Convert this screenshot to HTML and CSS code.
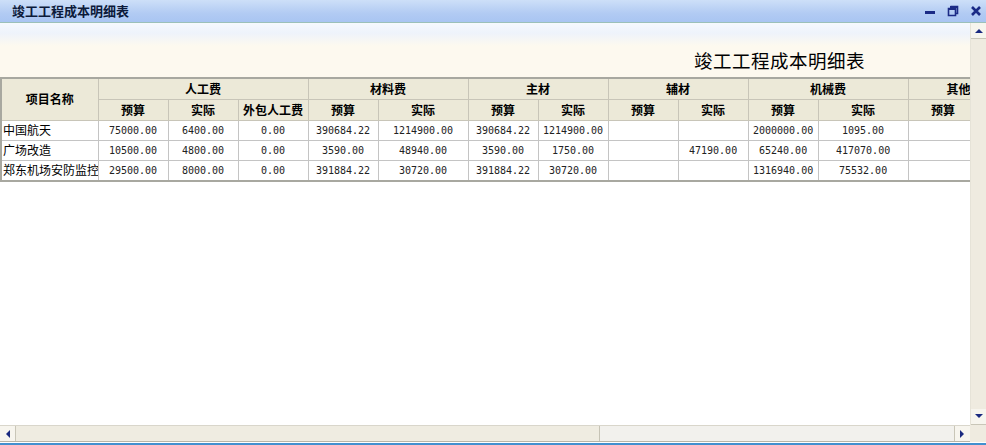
FILE: index.html
```html
<!DOCTYPE html>
<html>
<head>
<meta charset="utf-8">
<link rel="stylesheet" href="styles.css">
</head>
<body>
<div class="window">
  <div class="titlebar">
    <span class="title">竣工工程成本明细表</span>
    <div class="controls">
      <svg width="12" height="12" viewBox="0 0 12 12"><rect x="1" y="6" width="10" height="3" fill="#1b2b86"/></svg>
      <svg width="12" height="12" viewBox="0 0 12 12"><path d="M3.5 1.5h7v7h-2M1.5 3.5h7v7h-7z" fill="none" stroke="#1b2b86" stroke-width="1.6"/><rect x="1" y="3" width="8" height="2" fill="#1b2b86"/><rect x="3" y="1" width="8" height="2" fill="#1b2b86"/></svg>
      <svg width="12" height="12" viewBox="0 0 12 12"><path d="M2 2l8 8M10 2l-8 8" stroke="#1b2b86" stroke-width="2.6"/></svg>
    </div>
  </div>
  <div class="body">
    <div class="content">
      <div class="report-head">
        <h1 class="report-title">竣工工程成本明细表</h1>
      </div>
      <div class="table-wrap">
        <table class="grid">
          <colgroup>
            <col class="c-name"><col class="c70"><col class="c70"><col class="c70">
            <col class="c70"><col class="c90"><col class="c70"><col class="c70">
            <col class="c70"><col class="c70"><col class="c70"><col class="c90">
            <col class="c70">
          </colgroup>
          <thead>
            <tr class="h1">
              <th rowspan="2">项目名称</th>
              <th colspan="3">人工费</th>
              <th colspan="2">材料费</th>
              <th colspan="2">主材</th>
              <th colspan="2">辅材</th>
              <th colspan="2">机械费</th>
              <th class="other">其他</th>
            </tr>
            <tr class="h2">
              <th>预算</th><th>实际</th><th>外包人工费</th>
              <th>预算</th><th>实际</th>
              <th>预算</th><th>实际</th>
              <th>预算</th><th>实际</th>
              <th>预算</th><th>实际</th>
              <th>预算</th>
            </tr>
          </thead>
          <tbody>
            <tr>
              <td class="name">中国航天</td>
              <td>75000.00</td><td>6400.00</td><td>0.00</td>
              <td>390684.22</td><td>1214900.00</td>
              <td>390684.22</td><td>1214900.00</td>
              <td></td><td></td>
              <td>2000000.00</td><td>1095.00</td>
              <td></td>
            </tr>
            <tr>
              <td class="name">广场改造</td>
              <td>10500.00</td><td>4800.00</td><td>0.00</td>
              <td>3590.00</td><td>48940.00</td>
              <td>3590.00</td><td>1750.00</td>
              <td></td><td>47190.00</td>
              <td>65240.00</td><td>417070.00</td>
              <td></td>
            </tr>
            <tr>
              <td class="name">郑东机场安防监控</td>
              <td>29500.00</td><td>8000.00</td><td>0.00</td>
              <td>391884.22</td><td>30720.00</td>
              <td>391884.22</td><td>30720.00</td>
              <td></td><td></td>
              <td>1316940.00</td><td>75532.00</td>
              <td></td>
            </tr>
          </tbody>
        </table>
      </div>
    </div>
    <div class="vscroll">
      <div class="sbtn"><svg width="8" height="5" viewBox="0 0 8 5"><path d="M0 5L4 1 8 5z" fill="#1a2a80"/></svg></div>
      <div class="vtrack"></div>
      <div class="sbtn"><svg width="8" height="5" viewBox="0 0 8 5"><path d="M0 0L4 4 8 0z" fill="#1a2a80"/></svg></div>
    </div>
  </div>
  <div class="hbar">
    <div class="hscroll">
      <div class="sbtn"><svg width="5" height="8" viewBox="0 0 5 8"><path d="M5 0L1 4 5 8z" fill="#1a2a80"/></svg></div>
      <div class="hthumb"></div>
      <div class="htrack"></div>
      <div class="sbtn"><svg width="5" height="8" viewBox="0 0 5 8"><path d="M0 0L4 4 0 8z" fill="#1a2a80"/></svg></div>
    </div>
    <div class="corner"></div>
  </div>
  <div class="bottom"></div>
</div>
</body>
</html>
```

FILE: styles.css
```css
* { box-sizing: border-box; }
html, body { margin: 0; padding: 0; }
body {
  width: 986px;
  height: 445px;
  overflow: hidden;
  font-family: "Noto Sans CJK SC", "Liberation Sans", sans-serif;
  font-size: 12px;
  color: #000;
  background: #fff;
}
.window {
  display: flex;
  flex-direction: column;
  height: 445px;
}
.titlebar {
  height: 23px;
  flex: none;
  display: flex;
  align-items: center;
  justify-content: space-between;
  padding: 0 4px 1px 12px;
  background: linear-gradient(#cddff8, #b2cbf3 60%, #a9c5f2);
  border-bottom: 1px solid #9cc0b8;
}
.title {
  font-weight: bold;
  font-size: 13px;
  color: #0c1a3a;
}
.controls {
  display: flex;
  gap: 11px;
  align-items: center;
  padding-right: 0;
}
.body {
  flex: 1;
  display: flex;
  min-height: 0;
}
.content {
  flex: 1;
  min-width: 0;
  overflow: hidden;
  background: #fff;
}
.report-head {
  height: 54px;
  background: linear-gradient(#f6f9fe 0px, #eef3fb 10px, #fdf9ef 23px, #fdf9ef);
  display: flex;
  align-items: flex-end;
  justify-content: flex-end;
  padding: 0 105px 5px 0;
}
.report-title {
  margin: 0;
  font-size: 18.5px;
  font-weight: normal;
  letter-spacing: 0.5px;
  line-height: 24px;
  color: #000;
}
.table-wrap {
  overflow: hidden;
  width: 100%;
}
.grid {
  border-collapse: collapse;
  table-layout: fixed;
  width: 978px;
  border-top: 2px solid #a8a8a0;
  border-bottom: 2px solid #a8a8a0;
  border-left: 2px solid #a8a8a0;
}
.c-name { width: 97px; }
.c70 { width: 70px; }
.c90 { width: 90px; }
.grid th {
  background: #ece9d8;
  font-weight: bold;
  font-size: 12px;
  border: 1px solid #c8c5b8;
  padding: 0;
  white-space: nowrap;
  overflow: hidden;
  line-height: 18px;
}
.grid .h1 th { height: 21px; }
.grid .h2 th { height: 21px; }
.grid .other { text-align: left; padding-left: 38px; }
.grid td {
  height: 20px;
  border: 1px solid #c4c4c4;
  padding: 1px 0 0;
  text-align: center;
  font-family: "DejaVu Sans Mono", "Liberation Mono", monospace;
  font-size: 10px;
  line-height: 18px;
  white-space: nowrap;
  overflow: hidden;
  color: #222;
}
.grid td.name {
  text-align: left;
  font-family: "Noto Sans CJK SC", sans-serif;
  font-size: 12px;
  padding: 0 0 0 1px;
  color: #000;
}
.vscroll {
  width: 16px;
  flex: none;
  display: flex;
  flex-direction: column;
  background: #f0ede3;
  border-left: 1px solid #e6e3d8;
}
.sbtn {
  width: 16px;
  height: 16px;
  flex: none;
  display: flex;
  align-items: center;
  justify-content: center;
  background: #f7f5ee;
  border-bottom: 1px solid #c9c6b8;
}
.vtrack { flex: 1; background: #efebe0; }
.hbar {
  height: 17px;
  flex: none;
  display: flex;
}
.hscroll {
  flex: 1;
  display: flex;
  background: #f1f0eb;
  border-top: 1px solid #d9d6cb;
  border-bottom: 1px solid #b8b5a8;
}
.hscroll .sbtn { height: 15px; border: none; border-right: 1px solid #c9c6b8; }
.hscroll .sbtn:last-child { border-right: none; border-left: 1px solid #c9c6b8; }
.hthumb {
  width: 584px;
  background: #efece1;
  border-right: 1px solid #c6c3b5;
}
.htrack { flex: 1; background: #f2f1ed; }
.corner { width: 16px; background: #efebe0; }
.bottom {
  height: 3px;
  flex: none;
  background: #fff;
  border-bottom: 2px solid #4290cf;
}
```
